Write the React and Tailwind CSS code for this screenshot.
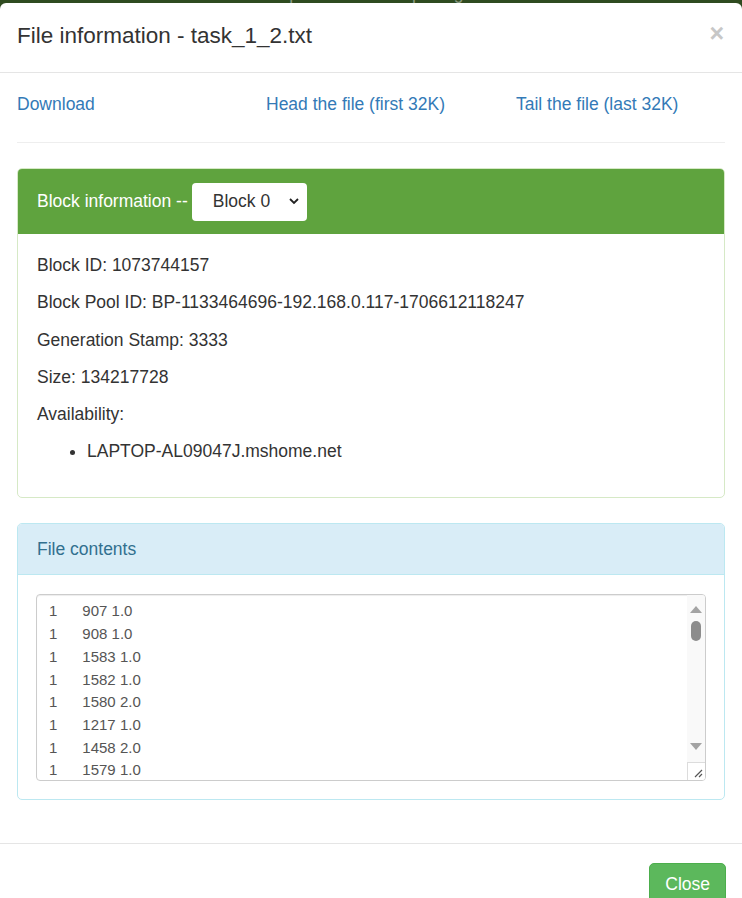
import React from 'react';

const lines = [
  '1\t907 1.0',
  '1\t908 1.0',
  '1\t1583 1.0',
  '1\t1582 1.0',
  '1\t1580 2.0',
  '1\t1217 1.0',
  '1\t1458 2.0',
  '1\t1579 1.0',
  '1\t1581 1.0',
];

const FileContents = () => {
  return (
    <div className="flex h-[187px] rounded-[4px] border border-[#ccc] shadow-[inset_0_1px_1px_rgba(0,0,0,0.075)] overflow-hidden">
      <div className="flex-1 overflow-hidden pl-[12px] pt-[5px] text-[15px] leading-[22.7px] text-[#555] whitespace-pre [tab-size:8]">
        {lines.map((l, i) => (
          <div key={i}>{l}</div>
        ))}
      </div>
      <div className="flex w-[18px] flex-col">
        <div className="flex flex-1 flex-col items-center bg-[#f9f9f9] pt-[11px] pb-[12px]">
          <svg width="12" height="7" viewBox="0 0 12 7">
            <path d="M6 0 L12 7 L0 7 Z" fill="#a3a3a3" />
          </svg>
          <div className="mt-[8px] h-[20px] w-[10px] rounded-full bg-[#8c8c8c]" />
          <div className="flex-1" />
          <svg width="12" height="7" viewBox="0 0 12 7">
            <path d="M0 0 L12 0 L6 7 Z" fill="#a3a3a3" />
          </svg>
        </div>
        <div className="relative h-[18px] border-t border-l border-[#dcdcdc] bg-white">
          <svg className="absolute right-[2px] bottom-[2px]" width="9" height="9" viewBox="0 0 9 9">
            <path d="M1 8 L8 1 M5 8 L8 5" stroke="#555" strokeWidth="1.2" />
          </svg>
        </div>
      </div>
    </div>
  );
};

const App = () => {
  return (
    <div className="h-[898px] overflow-hidden bg-[#2f4b20] font-['Liberation_Sans',Arial,sans-serif] text-[17.5px] text-[#333]">
      <div className="h-[3px] overflow-hidden">
        <div className="-mt-[19px] flex gap-[33px] pl-[19px] text-[17.5px] leading-[24px] text-[#8a9a80]">
          <span>Datanode Volume Failures</span>
          <span>Snapshot</span>
          <span>Startup Progress</span>
          <span>Utilities</span>
        </div>
      </div>

      <div className="min-h-[895px] rounded-t-[6px] bg-white">
        <div className="flex h-[70px] items-center justify-between border-b border-[#e5e5e5] pb-[4px] pl-[17px] pr-[18px]">
          <h4 className="text-[22.5px] leading-[31px] text-[#333]">File information - task_1_2.txt</h4>
          <span className="-mt-[4px] text-[25px] font-bold leading-none text-[#c7c7c7]">×</span>
        </div>

        <div className="px-[17px] pt-[19px] pb-[18px]">
          <div className="grid grid-cols-[249px_250px_1fr] leading-[24px] text-[#337ab7]">
            <a>Download</a>
            <a>Head the file (first 32K)</a>
            <a>Tail the file (last 32K)</a>
          </div>
          <hr className="mt-[26px] mb-[25px] border-t border-[#eee]" />

          <div className="overflow-hidden rounded-[5px] border border-[#d6e9c6]">
            <div className="flex h-[65px] items-center bg-[#5fa33e] px-[19px] text-white">
              <span>Block information --</span>
              <div className="ml-[4px] flex h-[38px] w-[115px] items-center justify-between rounded-[4px] bg-white pl-[21px] pr-[8px] text-[#333]">
                <span>Block 0</span>
                <svg width="10" height="7" viewBox="0 0 10 7">
                  <path d="M1 1 L5 5 L9 1" fill="none" stroke="#222" strokeWidth="1.8" />
                </svg>
              </div>
            </div>
            <div className="px-[19px] pt-[19px] pb-[21px] leading-[25px]">
              <p className="mb-[12.3px]">Block ID: 1073744157</p>
              <p className="mb-[12.3px]">Block Pool ID: BP-1133464696-192.168.0.117-1706612118247</p>
              <p className="mb-[12.3px]">Generation Stamp: 3333</p>
              <p className="mb-[12.3px]">Size: 134217728</p>
              <p className="mb-[12.3px]">Availability:</p>
              <ul className="mb-[12px] list-disc pl-[50px]">
                <li>LAPTOP-AL09047J.mshome.net</li>
              </ul>
            </div>
          </div>

          <div className="mt-[25px] mb-[25px] overflow-hidden rounded-[5px] border border-[#bce8f1]">
            <div className="flex h-[51px] items-center border-b border-[#bce8f1] bg-[#d9edf7] px-[19px] text-[#31708f]">
              File contents
            </div>
            <div className="px-[18px] pt-[19px] pb-[18px]">
              <FileContents />
            </div>
          </div>
        </div>

        <div className="flex justify-end border-t border-[#e5e5e5] pt-[19px] pr-[16px]">
          <button className="h-[41px] rounded-[5px] border border-[#4cae4c] bg-[#5cb85c] px-[15px] text-[17.5px] text-white">
            Close
          </button>
        </div>
      </div>
    </div>
  );
};

export default App;
